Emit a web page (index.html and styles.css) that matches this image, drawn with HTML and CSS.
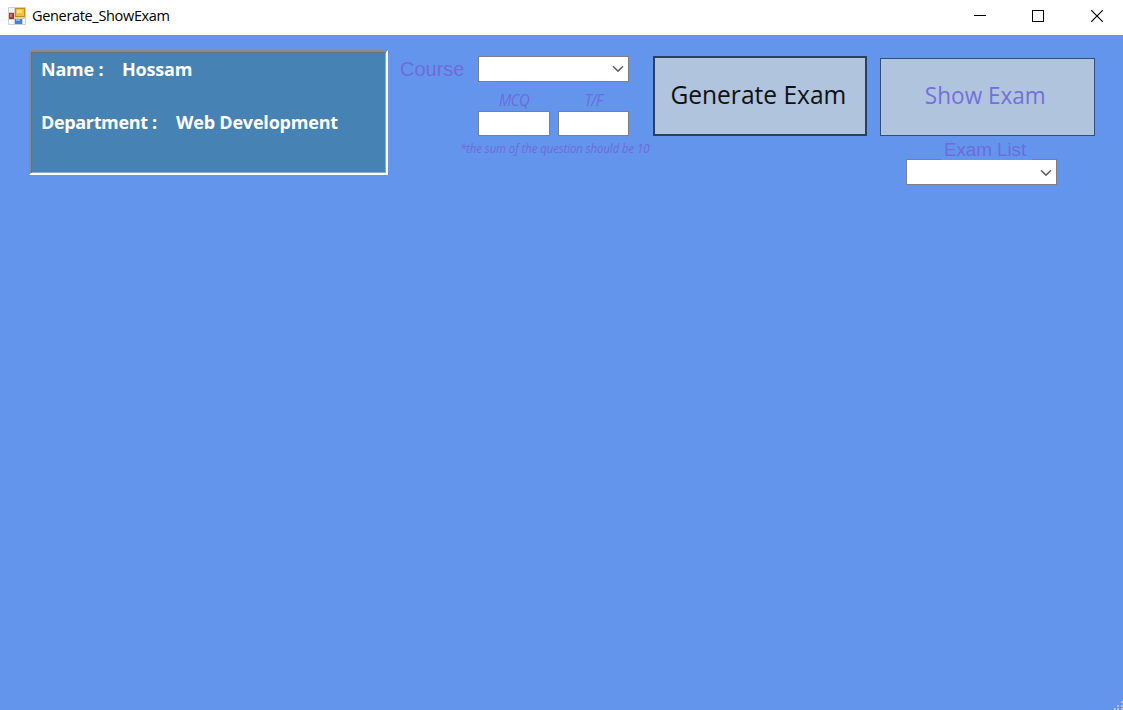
FILE: index.html
```html
<!DOCTYPE html>
<html lang="en">
<head>
<meta charset="utf-8">
<title>Generate_ShowExam</title>
<link rel="stylesheet" href="styles.css">
</head>
<body>
<header class="titlebar">
  <svg class="app-icon" width="18" height="18" viewBox="0 0 18 18">
    <rect width="18" height="18" rx="1" fill="#cfcfd2"/>
    <path d="M1 1h5v4H1zM1 13h5v4H1z" fill="#fafafa"/>
    <rect x="1" y="6" width="5" height="6" fill="#b8322c"/>
    <rect x="2" y="7" width="2" height="3" fill="#dc7770"/>
    <rect x="7.5" y="1.5" width="9" height="8" fill="#f5c13d" stroke="#c98a17"/>
    <rect x="9" y="3" width="5" height="3" fill="#ffe184"/>
    <rect x="7" y="12" width="7" height="5" fill="#487fdc"/>
    <rect x="8" y="12" width="4" height="2" fill="#83aff5"/>
    <path d="M15 12h2v5h-2z" fill="#fafafa"/>
  </svg>
  <span class="caption">Generate_ShowExam</span>
  <div class="controls">
    <svg width="12" height="12" viewBox="0 0 12 12"><path d="M0 5.5h12" stroke="#000"/></svg>
    <svg width="12" height="12" viewBox="0 0 12 12"><rect x=".5" y=".5" width="11" height="11" fill="none" stroke="#000"/></svg>
    <svg class="close" width="12" height="12" viewBox="0 0 12 12"><path d="M.3.3l11.4 11.4M11.7.3L.3 11.7" stroke="#000" stroke-width="1.1"/></svg>
  </div>
</header>
<main class="form">
  <section class="student">
    <div class="row"><span class="name-key">Name :</span><span class="name-val">Hossam</span></div>
    <div class="row"><span class="dept-key">Department :</span><span class="dept-val">Web Development</span></div>
  </section>
  <section class="course">
    <div class="course-row">
      <label class="course-label">Course</label>
      <div class="combo"><svg class="chevron" width="12" height="8" viewBox="0 0 12 8"><path d="M1 1.2l5 4.9 5-4.9" fill="none" stroke="#606060" stroke-width="1.5"/></svg></div>
    </div>
    <div class="counts">
      <div class="count"><label class="count-label">MCQ</label><div class="box"></div></div>
      <div class="count"><label class="count-label">T/F</label><div class="box narrow"></div></div>
    </div>
    <p class="note">*the sum of the question should be 10</p>
  </section>
  <button class="btn generate"><span class="generate-text">Generate Exam</span></button>
  <section class="show">
    <button class="btn show-btn"><span class="show-text">Show Exam</span></button>
    <label class="list-label">Exam List</label>
    <div class="combo list-combo"><svg class="chevron" width="12" height="8" viewBox="0 0 12 8"><path d="M1 1.2l5 4.9 5-4.9" fill="none" stroke="#606060" stroke-width="1.5"/></svg></div>
  </section>
</main>
<svg class="grip" width="9" height="9" viewBox="0 0 9 9"><path d="M7 0h2v2H7zM3 4h2v2H3zM7 4h2v2H7zM0 7h2v2H0zM3 7h2v2H3zM7 7h2v2H7z" fill="#b9bdc8"/></svg>
</body>
</html>
```
FILE: styles.css
```css
* { box-sizing: border-box; }
body {
  margin: 0;
  height: 710px;
  overflow: hidden;
  display: flex;
  flex-direction: column;
  background: #6495ed;
  font-family: "Open Sans", "Noto Sans", sans-serif;
}
span, label, .note { white-space: nowrap; }
svg { display: block; }

.titlebar {
  flex: none;
  display: flex;
  align-items: center;
  height: 35px;
  padding: 0 20px 4px 8px;
  background: #fff;
}
.caption {
  margin-left: 6px;
  font-size: 14.5px;
  line-height: 20px;
  letter-spacing: -0.33px;
  color: #000;
}
.controls { margin-left: auto; display: flex; gap: 46px; }
.controls .close { margin-left: 1px; }

.form {
  flex: 1;
  display: flex;
  align-items: flex-start;
  padding: 15px 0 0 29px;
  color: #6f6bdb;
}

.student {
  width: 359px;
  height: 125px;
  padding: 5px 0 0 10px;
  border: 2px solid;
  border-color: #8b8b8b #fff #fff #8b8b8b;
  background: #4682b4;
  box-shadow: inset 1px 1px #64747d, inset -1px -1px #8eadc6;
  color: #fff;
  font-size: 18px;
  font-weight: 700;
  letter-spacing: -0.2px;
}
.row { display: flex; height: 53px; line-height: 24px; }
.name-key { width: 81px; }
.dept-key { width: 135px; letter-spacing: -0.35px; }

.course { width: 265px; padding: 6px 0 0 12px; }
.course-row { display: flex; justify-content: space-between; padding-right: 24px; }
.course-label {
  font: 20px/26px "Liberation Sans", Arial, sans-serif;
  letter-spacing: 0;
}
.combo {
  display: flex;
  justify-content: flex-end;
  align-items: center;
  width: 151px;
  height: 26px;
  padding-right: 4px;
  border: 1px solid #7a7f88;
  background: #fff;
}
.list-combo .chevron { margin-top: 1px; }
.counts { display: flex; gap: 8px; margin: 8px 0 0 78px; }
.count { display: flex; flex-direction: column; }
.count-label {
  height: 21px;
  text-align: center;
  font-size: 15.5px;
  font-style: italic;
  line-height: 20px;
  letter-spacing: -0.6px;
  transform: scaleX(0.96);
}
.box { width: 72px; height: 25px; border: 1px solid #7a7f88; background: #fff; }
.box.narrow { width: 71px; }
.note {
  width: max-content;
  margin: 5px 0 0 60px;
  font-size: 12px;
  font-style: italic;
  line-height: 16px;
  letter-spacing: -0.1px;
  transform: scaleX(0.952);
  transform-origin: left;
}

.btn {
  display: flex;
  align-items: center;
  justify-content: center;
  padding: 0;
  border: 1px solid #304d73;
  background: #b0c4de;
  font-family: inherit;
  font-size: 25.5px;
}
.generate { width: 214px; height: 80px; margin-top: 6px; border: 2px solid #29415f; color: #111; }
.show { width: 215px; margin: 8px 0 0 13px; display: flex; flex-direction: column; }
.show-btn { height: 78px; color: #7370dc; font-size: 24px; }
.generate-text { padding-bottom: 4px; transform: translateX(-2px) scaleX(0.963); }
.show-text { padding-bottom: 5px; transform: translateX(-2px) scaleX(0.94); }
.list-label {
  align-self: flex-start;
  z-index: 1;
  width: 91px;
  height: 24px;
  margin-left: 61px;
  padding-left: 3px;
  background: #6495ed;
  font: 19px/27px "Liberation Sans", Arial, sans-serif;
  letter-spacing: -0.15px;
}
.list-combo { margin: -1px 0 0 26px; }

.grip { position: absolute; right: 0; bottom: 0; }
```
